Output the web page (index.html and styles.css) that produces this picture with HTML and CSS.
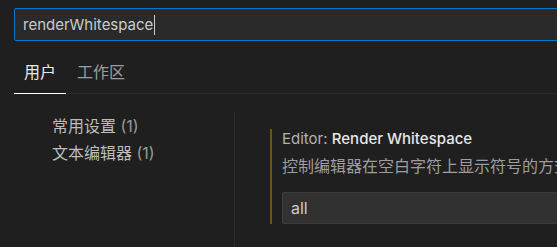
FILE: index.html
```html
<!DOCTYPE html>
<html lang="zh-CN">
<head>
    <meta charset="UTF-8">
    <title>设置</title>
    <link rel="stylesheet" href="styles.css">
</head>
<body>
    <div class="search-box">
        <span class="search-text">renderWhitespace</span><span class="caret"></span>
    </div>

    <div class="tabs">
        <div class="tab active">用户</div>
        <div class="tab">工作区</div>
    </div>

    <div class="settings-body">
        <ul class="toc">
            <li>常用设置 <span class="count">(1)</span></li>
            <li>文本编辑器 <span class="count">(1)</span></li>
        </ul>
        <div class="divider"></div>
        <div class="setting-list">
            <div class="setting modified">
                <div class="setting-title"><span class="category">Editor: </span>Render Whitespace</div>
                <div class="setting-desc">控制编辑器在空白字符上显示符号的方式。</div>
                <div class="select-box">all</div>
            </div>
        </div>
    </div>
</body>
</html>
```

FILE: styles.css
```css
body {
    margin: 0;
    width: 557px;
    height: 247px;
    overflow: hidden;
    background-color: #1f1f1f;
    color: #cccccc;
    font-family: 'Inter', 'Noto Sans CJK SC', sans-serif;
    font-size: 16px;
}

.search-box {
    margin: 8px 0 0 14px;
    width: 600px;
    height: 33px;
    box-sizing: border-box;
    border: 1px solid #0078d4;
    border-radius: 2px;
    background-color: #2a2a2a;
    display: flex;
    align-items: center;
    padding-left: 8px;
}

.search-text {
    font-size: 15px;
    color: #cccccc;
}

.caret {
    display: inline-block;
    width: 1px;
    height: 20px;
    background-color: #cccccc;
    margin-left: 1px;
}

.tabs {
    display: flex;
    margin-left: 14px;
    height: 53px;
    border-bottom: 1px solid #2b2b2b;
    box-sizing: border-box;
}

.tab {
    padding: 21px 0 0 11px;
    line-height: 20px;
    color: #9d9d9d;
}

.tab.active {
    color: #e7e7e7;
    border-bottom: 1px solid #ffffff;
    padding: 21px 10px 0 10px;
    margin-bottom: -1px;
}

.settings-body {
    display: flex;
    height: 153px;
}

.toc {
    list-style: none;
    margin: 0;
    padding: 22px 0 0 52px;
    width: 234px;
    flex-shrink: 0;
    box-sizing: border-box;
}

.toc li {
    color: #bdbdbd;
    height: 27px;
    line-height: 20px;
    white-space: nowrap;
}

.toc .count {
    color: #9a9a9a;
}

.divider {
    width: 1px;
    flex-shrink: 0;
    margin-top: 18px;
    background-color: #2e2e2e;
}

.setting-list {
    flex: 1;
    min-width: 0;
    overflow: hidden;
    padding: 37px 0 0 35px;
}

.setting {
    padding-left: 10px;
}

.setting.modified {
    border-left: 2px solid #6e5219;
}

.setting-title {
    color: #e7e7e7;
    font-size: 15px;
    font-weight: 500;
    line-height: 20px;
    margin-top: -2px;
    white-space: nowrap;
}

.setting-title .category {
    color: #b3b3b3;
    font-weight: 400;
}

.setting-desc {
    margin-top: 7px;
    color: #9d9d9d;
    line-height: 20px;
    white-space: nowrap;
}

.select-box {
    margin-top: 16px;
    height: 32px;
    box-sizing: border-box;
    width: 400px;
    background-color: #313131;
    border: 1px solid #3c3c3c;
    border-radius: 2px;
    padding: 0 8px;
    display: flex;
    align-items: center;
    color: #cccccc;
}
```
